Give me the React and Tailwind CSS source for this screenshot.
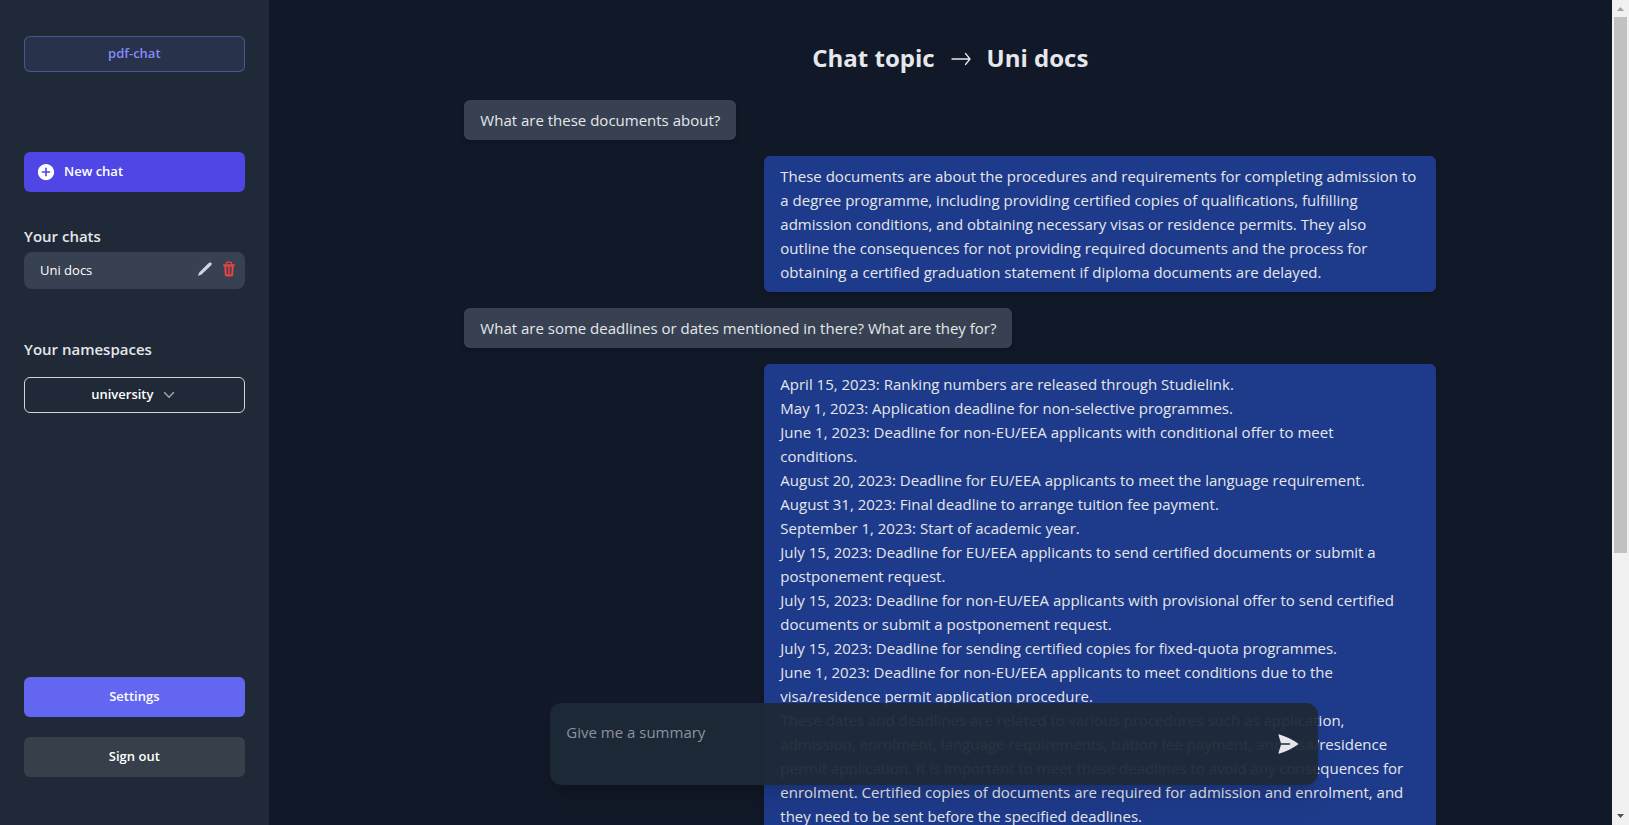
import React from "react";
import { IoMdAddCircle } from "react-icons/io";

const heading = "text-[15px] leading-6 font-semibold text-[#e5e7eb]";

const messages = [
  { from: "user", lines: ["What are these documents about?"] },
  {
    from: "bot",
    lines: [
      "These documents are about the procedures and requirements for completing admission to a degree programme, including providing certified copies of qualifications, fulfilling admission conditions, and obtaining necessary visas or residence permits. They also\noutline the consequences for not providing required documents and the process for\nobtaining a certified graduation statement if diploma documents are delayed.",
    ],
  },
  {
    from: "user",
    lines: ["What are some deadlines or dates mentioned in there? What are they for?"],
  },
  {
    from: "bot",
    lines: [
      "April 15, 2023: Ranking numbers are released through Studielink.",
      "May 1, 2023: Application deadline for non-selective programmes.",
      "June 1, 2023: Deadline for non-EU/EEA applicants with conditional offer to meet\nconditions.",
      "August 20, 2023: Deadline for EU/EEA applicants to meet the language requirement.",
      "August 31, 2023: Final deadline to arrange tuition fee payment.",
      "September 1, 2023: Start of academic year.",
      "July 15, 2023: Deadline for EU/EEA applicants to send certified documents or submit a postponement request.",
      "July 15, 2023: Deadline for non-EU/EEA applicants with provisional offer to send certified documents or submit a postponement request.",
      "July 15, 2023: Deadline for sending certified copies for fixed-quota programmes.",
      "June 1, 2023: Deadline for non-EU/EEA applicants to meet conditions due to the visa/residence permit application procedure.",
      "These dates and deadlines are related to various procedures such as application, admission, enrolment, language requirements, tuition fee payment, and visa/residence permit application. It is important to meet these deadlines to avoid any consequences for enrolment. Certified copies of documents are required for admission and enrolment, and they need to be sent before the specified deadlines.",
    ],
  },
];

function PencilIcon() {
  return (
    <svg viewBox="0 0 16 16" className="size-4" fill="currentColor" aria-hidden="true">
      <path d="M0.900 14.900l1.300-3.500L11.400 2.200c.9-.9 2.100-1.100 2.900-.4.800.8.500 1.900-.3 2.800L4.500 13.600z" />
    </svg>
  );
}

function TrashIcon() {
  return (
    <svg viewBox="0 0 16 16" className="size-4" fill="none" stroke="currentColor" aria-hidden="true">
      <path d="M2.700 3.900h10.600" strokeWidth="1.500" strokeLinecap="round" />
      <path d="M5.400 3.600V2.300c0-.7.4-1.100 1.100-1.100h3c.7 0 1.100.4 1.100 1.100v1.300" strokeWidth="1.200" />
      <path d="M4.200 4l.6 9.600c0 .7.400 1 1 1h4.400c.6 0 1-.3 1-1L11.800 4" strokeWidth="2" />
      <path d="M8 5v9" strokeWidth="1.500" />
      <path d="M4.500 5.200h7" strokeWidth="1" />
    </svg>
  );
}

function SendIcon() {
  return (
    <svg viewBox="0 0 24 24" className="size-6" fill="currentColor" aria-hidden="true">
      <path d="M3.478 2.405a.75.75 0 00-.926.94l2.432 7.905H13.500a.75.75 0 010 1.500H4.984l-2.432 7.905a.75.75 0 00.926.94 60.519 60.519 0 0018.445-8.986.75.75 0 000-1.218A60.517 60.517 0 003.478 2.405z" />
    </svg>
  );
}

function Sidebar() {
  return (
    <aside className="flex w-1/6 shrink-0 flex-col bg-[#1f2937] px-6 pt-9 pb-12">
      <a
        href="#home"
        className="flex h-9 items-center justify-center rounded-md border border-[#818cf8]/40 bg-[#818cf8]/10 text-[13px] font-semibold text-[#818cf8]"
      >
        pdf-chat
      </a>
      <button
        type="button"
        className="mt-20 flex h-10 items-center gap-2 rounded-md bg-[#4f46e5] px-3 text-[13px] font-semibold text-white"
      >
        <IoMdAddCircle className="size-5" aria-hidden="true" />
        New chat
      </button>

      <h2 className={`mt-8 ${heading}`}>Your chats</h2>
      <div className="mt-1 flex h-[37px] items-center rounded-lg bg-[#374151] pr-2 pl-4">
        <a href="#uni-docs" className="grow text-[13px] text-white">
          Uni docs
        </a>
        <div className="flex gap-2 pb-1">
          <button type="button" aria-label="Rename chat" className="text-[#d1d5db]">
            <PencilIcon />
          </button>
          <button type="button" aria-label="Delete chat" className="text-[#ef4444]">
            <TrashIcon />
          </button>
        </div>
      </div>

      <h2 className={`mt-12 ${heading}`}>Your namespaces</h2>
      <button
        type="button"
        aria-haspopup="listbox"
        className="mt-4 flex h-9 items-center justify-center gap-2 rounded-md border border-[#d1d5db] text-[13px] font-semibold text-white"
      >
        university
        <svg viewBox="0 0 16 16" className="size-4" fill="none" stroke="#9ca3af" strokeWidth="1.500" strokeLinecap="round" strokeLinejoin="round" aria-hidden="true">
          <path d="M3.500 5.500L8 10.300l4.500-4.800" />
        </svg>
      </button>

      <button
        type="button"
        className="mt-auto h-10 shrink-0 rounded-md bg-[#6366f1] text-[13px] font-semibold text-white"
      >
        Settings
      </button>
      <button
        type="button"
        className="mt-5 h-10 shrink-0 rounded-md bg-[#373f4b] text-[13px] font-semibold text-white"
      >
        Sign out
      </button>
    </aside>
  );
}

function Message({ from, lines }) {
  const look = from === "user" ? "self-start bg-[#374151]" : "self-end bg-[#1e3a8a]";
  return (
    <div className={`max-w-2xl rounded-md px-4 py-2 text-[15px] leading-6 text-[#e5e7eb] shadow-md ${look}`}>
      {lines.map((line) => (
        <p key={line} className="whitespace-pre-line">
          {line}
        </p>
      ))}
    </div>
  );
}

function Scrollbar() {
  return (
    <div className="flex w-[17px] shrink-0 flex-col items-center bg-[#f1f1f1]" aria-hidden="true">
      <svg viewBox="0 0 17 17" className="h-[17px] w-[17px] shrink-0" fill="#a3a3a3">
        <path d="M5 11L8.500 7 12 11z" />
      </svg>
      <div className="h-[65%] w-[13px] bg-[#c1c1c1]" />
      <svg viewBox="0 0 17 17" className="mt-auto h-[17px] w-[17px] shrink-0" fill="#505050">
        <path d="M5 6h7L8.500 10z" />
      </svg>
    </div>
  );
}

export default function App() {
  return (
    <div className="flex h-screen overflow-hidden bg-[#111827] font-['Open_Sans','Noto_Sans',sans-serif]">
      <div className="flex min-w-0 grow">
        <Sidebar />
        <main className="relative flex min-w-0 grow flex-col items-center overflow-hidden pl-5">
          <h1 className="mt-10 flex h-9 shrink-0 items-center gap-4 text-[24px] leading-8 font-bold text-[#e5e7eb]">
            Chat topic
            <svg viewBox="0 0 20 16" className="h-4 w-5" fill="none" stroke="currentColor" strokeWidth="1.300" strokeLinecap="round" strokeLinejoin="round" role="img" aria-label="to">
              <path d="M1 9h18M14.500 3.500L19 9l-4.500 5.500" />
            </svg>
            Uni docs
          </h1>
          <div className="mt-6 flex w-full max-w-[972px] flex-col gap-4">
            {messages.map((m) => (
              <Message key={m.lines[0]} {...m} />
            ))}
          </div>
          <div className="absolute inset-x-0 bottom-10 flex justify-center pr-3">
            <form
              className="flex h-[82px] w-full max-w-3xl items-center rounded-xl bg-[#1f2937]/95 pr-[18px] shadow-xl"
              onSubmit={(e) => e.preventDefault()}
            >
              <textarea
                aria-label="Message"
                placeholder="Give me a summary"
                className="h-full grow resize-none bg-transparent px-4 py-[17px] text-[15px] leading-6 text-[#e5e7eb] outline-none placeholder:text-[#8b929e]"
              />
              <button type="submit" aria-label="Send" className="text-[#e5e7eb]">
                <SendIcon />
              </button>
            </form>
          </div>
        </main>
      </div>
      <Scrollbar />
    </div>
  );
}
